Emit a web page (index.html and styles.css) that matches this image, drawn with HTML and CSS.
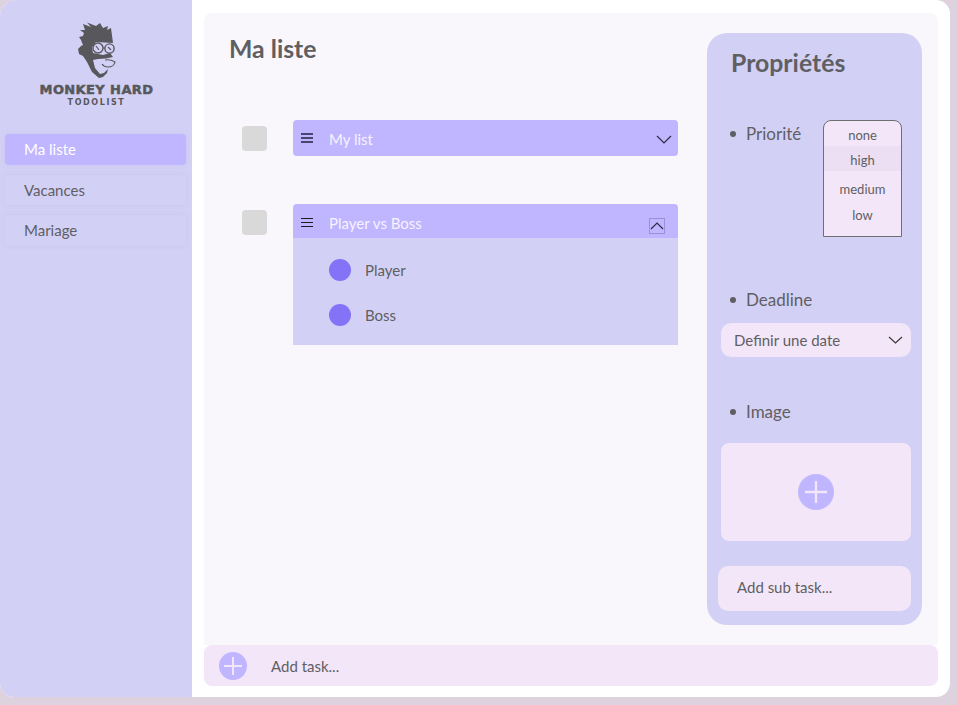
FILE: index.html
```html
<!DOCTYPE html>
<html lang="fr">
<head>
    <meta charset="UTF-8">
    <meta name="viewport" content="width=device-width, initial-scale=1.0">
    <title>Monkey Hard Todolist</title>
    <link rel="stylesheet" href="styles.css">
</head>
<body>
    <div class="app">
        <aside class="sidebar">
            <div class="logo">
                <svg class="logo-monkey" width="42" height="58" viewBox="76 21 42 58">
                    <path fill="#58585c" d="M83 24 L91 27 L87 22.5 L96 26 L100 23 L103 28 L108 26 L107 30 L111 28 L113 43 L96 42 L92 47 L93 53 L103 55 L110 53 L113 57 L106 58.5 L98 59 L93 60 L95 68 L100 74 L104 73 L108 69 L107 73 L103 77 L99 78 L92 72 L87 62 L83 56 L79 54 L78 49 L81 46 L83 45 L81 40 L79 37 L83 36 L84 33 L80 30 L85 30 Z"/>
                    <path fill="none" stroke="#58585c" stroke-width="1.2" d="M105 60 Q110 59 115 62 Q114 67 108 67 Q104 67 102 64"/>
                    <circle cx="98" cy="48" r="5" fill="#d3d0f5" stroke="#58585c" stroke-width="1.4"/>
                    <circle cx="109.5" cy="48.5" r="4.6" fill="#d3d0f5" stroke="#58585c" stroke-width="1.4"/>
                    <path fill="none" stroke="#58585c" stroke-width="1.2" d="M96 46 L99 50 M108 47 L111 50 M103 48 H105"/>
                </svg>
                <div class="logo-name">MONKEY HARD</div>
                <div class="logo-sub">TODOLIST</div>
            </div>
            <nav class="lists">
                <a class="list-link active">Ma liste</a>
                <a class="list-link">Vacances</a>
                <a class="list-link">Mariage</a>
            </nav>
        </aside>

        <main class="main">
            <div class="content">
                <section class="tasks">
                    <h1>Ma liste</h1>

                    <div class="task">
                        <span class="check"></span>
                        <div class="task-box">
                            <div class="task-head">
                                <span class="burger"></span>
                                <span class="task-name">My list</span>
                                <svg class="chevron" width="16" height="9" viewBox="0 0 16 9"><path d="M1 1 L8 8 L15 1" fill="none" stroke="#2e2a44" stroke-width="1.2"/></svg>
                            </div>
                        </div>
                    </div>

                    <div class="task">
                        <span class="check"></span>
                        <div class="task-box">
                            <div class="task-head open">
                                <span class="burger dark"></span>
                                <span class="task-name">Player vs Boss</span>
                                <span class="chevron-btn">
                                    <svg width="14" height="8" viewBox="0 0 14 8"><path d="M1 7 L7 1 L13 7" fill="none" stroke="#2e2a44" stroke-width="1.2"/></svg>
                                </span>
                            </div>
                            <div class="subtasks">
                                <div class="subtask"><span class="dot"></span>Player</div>
                                <div class="subtask"><span class="dot"></span>Boss</div>
                            </div>
                        </div>
                    </div>
                </section>

                <aside class="props">
                    <h2>Propriétés</h2>

                    <div class="prop-priority">
                        <div class="prop-label">Priorité</div>
                        <ul class="priority-list">
                            <li>none</li>
                            <li class="selected">high</li>
                            <li class="medium">medium</li>
                            <li class="low">low</li>
                        </ul>
                    </div>

                    <div class="prop-label deadline">Deadline</div>
                    <div class="date-select">
                        Definir une date
                        <svg width="15" height="8" viewBox="0 0 15 8"><path d="M1 1 L7.5 7 L14 1" fill="none" stroke="#3a3a3a" stroke-width="1.2"/></svg>
                    </div>

                    <div class="prop-label image">Image</div>
                    <div class="image-box">
                        <svg width="36" height="36" viewBox="0 0 36 36">
                            <circle cx="18" cy="18" r="18" fill="#c0b5ff"/>
                            <path d="M18 7 V29 M7 18 H29" stroke="#f3e6f8" stroke-width="2.4"/>
                        </svg>
                    </div>

                    <div class="sub-input">Add sub task...</div>
                </aside>
            </div>

            <div class="add-task">
                <svg width="28" height="28" viewBox="0 0 28 28">
                    <circle cx="14" cy="14" r="14" fill="#c0b5ff"/>
                    <path d="M14 5 V23 M5 14 H23" stroke="#f3e6f8" stroke-width="2"/>
                </svg>
                <span>Add task...</span>
            </div>
        </main>
    </div>
</body>
</html>
```

FILE: styles.css
```css
* {
    box-sizing: border-box;
}

body {
    margin: 0;
    height: 705px;
    overflow: hidden;
    background-color: #ded2df;
    font-family: 'Lato', 'Liberation Sans', sans-serif;
    color: #5f5f63;
}

.app {
    display: flex;
    width: 950px;
    height: 697px;
    background-color: white;
    border-radius: 16px 14px 14px 14px;
    overflow: hidden;
}

/* sidebar */
.sidebar {
    width: 192px;
    flex-shrink: 0;
    padding: 21px 6px 0 5px;
    background-color: #d3d0f5;
}

.logo {
    display: flex;
    flex-direction: column;
    align-items: center;
    height: 113px;
    padding-left: 2px;
}

.logo-name {
    margin-top: 3px;
    font-family: 'DejaVu Sans', sans-serif;
    font-weight: bold;
    font-size: 13px;
    line-height: 15px;
    letter-spacing: 0.4px;
    color: #58585c;
    -webkit-text-stroke: 0.5px #58585c;
}

.logo-sub {
    margin-top: 1px;
    font-family: 'DejaVu Sans', sans-serif;
    font-weight: bold;
    font-size: 8px;
    line-height: 10px;
    letter-spacing: 1.6px;
    color: #58585c;
}

.lists {
    display: flex;
    flex-direction: column;
    gap: 10px;
}

.list-link {
    height: 30.7px;
    padding-left: 19px;
    border-radius: 4px;
    font-size: 15px;
    line-height: 30px;
    background-color: #d3d0f5;
    box-shadow: 0 0 5px rgba(170,160,230,0.2);
}

.list-link.active {
    background-color: #c0b5ff;
    color: white;
}

/* main area */
.main {
    flex: 1;
    display: flex;
    flex-direction: column;
    padding: 13px 12px 11px;
}

.content {
    flex: 1;
    display: flex;
    padding: 20px 16px 20px 25px;
    background-color: #f9f7fb;
    border-radius: 8px 8px 0 0;
}

.tasks {
    flex: 1;
}

h1 {
    margin: -1px 0 55px;
    font-size: 24.8px;
    line-height: 33px;
    font-weight: 700;
    color: #5f5f63;
}

.task {
    display: flex;
    align-items: flex-start;
    margin-bottom: 48px;
    padding-right: 29px;
}

.check {
    width: 25px;
    height: 25px;
    margin: 6px 26px 0 13px;
    border-radius: 4px;
    background-color: #d9d9d9;
}

.task-box {
    flex: 1;
}

.task-head {
    display: flex;
    align-items: center;
    height: 36px;
    padding: 0 6px 0 8px;
    border-radius: 4px;
    background-color: #c0b5ff;
}

.task-head.open {
    height: 34px;
    border-radius: 4px 4px 0 0;
    padding-right: 13px;
}

.burger {
    position: relative;
    width: 12px;
    height: 10px;
    margin-right: 16px;
    border-top: 2px solid #4a4570;
    border-bottom: 2px solid #4a4570;
}

.burger::after {
    content: "";
    position: absolute;
    left: 0;
    right: 0;
    top: 2px;
    height: 2px;
    background-color: #4a4570;
}

.burger.dark {
    height: 9px;
    margin-top: 2px;
    border-top: 1px solid #1c1c1c;
    border-bottom: 1px solid #1c1c1c;
}

.burger.dark::after {
    top: 3px;
    height: 1px;
    background-color: #1c1c1c;
}

.task-name {
    flex: 1;
    padding-top: 2px;
    font-size: 15px;
    color: #f6f3ff;
}

.open .task-name {
    padding-top: 4px;
}

.chevron {
    margin-top: 3px;
}

.chevron-btn {
    display: flex;
    align-items: center;
    justify-content: center;
    width: 16px;
    height: 16px;
    margin-top: 10px;
    border: 1px solid #9a8fd8;
}

.subtasks {
    height: 107px;
    padding: 9px 0 0 36px;
    background-color: #d3d0f5;
}

.subtask {
    display: flex;
    align-items: center;
    height: 45px;
    font-size: 15px;
}

.dot {
    width: 22px;
    height: 22px;
    margin-right: 14px;
    border-radius: 50%;
    background-color: #8472f7;
}

/* properties panel */
.props {
    width: 215px;
    flex-shrink: 0;
    height: 592px;
    padding: 13px 11px 14px 14px;
    border-radius: 20px;
    background-color: #d3d0f5;
}

h2 {
    margin: 0 0 40px 10px;
    font-size: 24.8px;
    line-height: 34px;
    font-weight: 700;
    color: #5f5f63;
}

.prop-priority {
    display: flex;
    justify-content: space-between;
    height: 116px;
    padding-right: 9px;
}

.prop-label {
    position: relative;
    margin-left: 25px;
    padding-top: 4px;
    font-size: 17px;
    line-height: 20px;
}

.prop-label::before {
    content: "";
    position: absolute;
    left: -16px;
    top: 11px;
    width: 6px;
    height: 6px;
    border-radius: 50%;
    background-color: #5f5f63;
}

.priority-list {
    width: 79px;
    height: 117px;
    margin: 0;
    padding: 4px 0 0;
    list-style: none;
    border: 1px solid #6f6f73;
    border-radius: 8px 8px 0 0;
    background-color: #f3e6f8;
    font-size: 13px;
    text-align: center;
}

.priority-list li {
    height: 21px;
    line-height: 20px;
}

.priority-list .selected {
    height: 25px;
    line-height: 28px;
    background-color: #ecdff3;
}

.priority-list .medium {
    height: 26px;
    margin-top: 6px;
    line-height: 25px;
}

.priority-list .low {
    line-height: 24px;
}

.deadline {
    margin-top: 50px;
}

.date-select {
    display: flex;
    justify-content: space-between;
    align-items: center;
    height: 34px;
    margin-top: 13px;
    padding: 0 8px 0 13px;
    border-radius: 10px;
    background-color: #f3e6f8;
    font-size: 15px;
}

.image {
    margin-top: 41px;
}

.image-box {
    display: flex;
    align-items: center;
    justify-content: center;
    height: 98px;
    margin-top: 21px;
    border-radius: 8px;
    background-color: #f3e6f8;
}

.sub-input {
    height: 45px;
    margin: 25px 0 0 -3px;
    padding-left: 19px;
    border-radius: 10px;
    background-color: #f3e6f8;
    font-size: 15px;
    line-height: 42px;
}

/* bottom bar */
.add-task {
    display: flex;
    align-items: center;
    gap: 24px;
    height: 41px;
    padding-left: 15px;
    border-radius: 8px;
    background-color: #f3e6f8;
    font-size: 15px;
}
```
